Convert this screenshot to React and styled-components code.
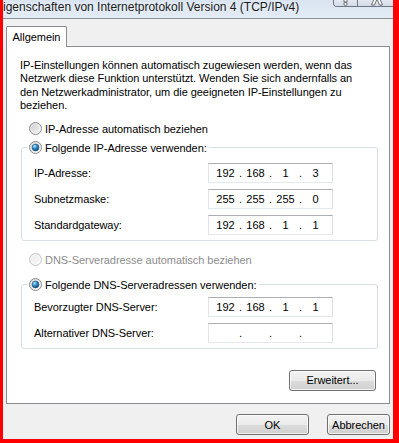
import React from 'react';
import styled, { createGlobalStyle } from 'styled-components';

const FONT = `"Liberation Sans", Arial, sans-serif`;

const Global = createGlobalStyle`
  html, body { margin: 0; padding: 0; background: #fff; }
  body { width: 399px; height: 443px; overflow: hidden; }
  *, *::before, *::after { box-sizing: border-box; }
`;

const Frame = styled.div`
  width: 399px;
  height: 443px;
  border-left: 3px solid #ff0000;
  border-right: 6px solid #ff0000;
  border-bottom: 4px solid #ff0000;
  display: flex;
  flex-direction: column;
  background: #f0f0f0;
  font-family: ${FONT};
  font-size: 11px;
  letter-spacing: -0.05px;
  color: #000;
  overflow: hidden;
`;

const TitleBar = styled.div`
  flex: none;
  height: 19px;
  display: flex;
  align-items: flex-start;
  background: linear-gradient(#d9e4f1, #e3ebf5);
  border-bottom: 1px solid #8b8f96;
  overflow: hidden;
`;

const TitleText = styled.div`
  flex: none;
  margin-left: -8px;
  font-size: 12px;
  line-height: 14px;
  letter-spacing: 0;
  color: #1b1b1b;
  white-space: nowrap;
  text-shadow: 0 0 5px rgba(255, 255, 255, 0.9);
`;

const CaptionButtons = styled.div`
  flex: none;
  margin-left: auto;
  display: flex;
  height: 7px;
  border: 1px solid #6f7784;
  border-top: none;
  border-right: none;
  border-radius: 0 0 0 4px;
  overflow: hidden;
`;

const CaptionButton = styled.div`
  flex: none;
  width: ${(p) => p.$w}px;
  height: 100%;
  display: flex;
  justify-content: center;
  align-items: flex-start;
  padding-left: ${(p) => p.$shift || 0}px;
  background: linear-gradient(#e4eaf2, #d3dbe6);
  & + & { border-left: 1px solid #6f7784; }
`;

const Client = styled.div`
  flex: 1;
  display: flex;
  flex-direction: column;
  padding: 7px 3px 0 3px;
`;

const TabStrip = styled.div`
  display: flex;
  height: 20px;
  position: relative;
  z-index: 1;
`;

const Tab = styled.div`
  width: 61px;
  height: 21px;
  background: #fff;
  border: 1px solid #898c95;
  border-bottom: none;
  border-radius: 2px 2px 0 0;
  display: flex;
  align-items: center;
  justify-content: center;
  padding-bottom: 1px;
`;

const Panel = styled.div`
  flex: none;
  height: 358px;
  background: #fff;
  border: 1px solid #898c95;
  padding: 12px 11px 0 13px;
  display: flex;
  flex-direction: column;
`;

const Intro = styled.p`
  margin: 0;
  line-height: 13.4px;
  white-space: nowrap;
`;

const RadioRow = styled.div`
  display: flex;
  align-items: center;
  gap: 3px;
  height: 16px;
  margin: ${(p) => p.$mt}px 0 0 9px;
  color: ${(p) => (p.$disabled ? '#8d8d8d' : '#000')};
  white-space: nowrap;
`;

const Group = styled.fieldset`
  margin: ${(p) => p.$mt}px 0 0 1px;
  padding: ${(p) => p.$pt}px 0 ${(p) => p.$pb}px 12px;
  border: 1px solid #d5dfe5;
  border-radius: 3px;
  min-width: 0;
  display: flex;
  flex-direction: column;
  gap: 6px;
`;

const Legend = styled.legend`
  margin-left: -7px;
  padding: 0 2px;
  height: 16px;
  display: flex;
  align-items: center;
  gap: 3px;
  white-space: nowrap;
`;

const FieldRow = styled.div`
  display: grid;
  grid-template-columns: 174px 125px;
  align-items: center;
  height: 20px;
  white-space: nowrap;
`;

const IpBox = styled.div`
  height: 20px;
  border: 1px solid;
  border-color: #abadb3 #dbdfe6 #e3e9ef #e2e3ea;
  background: #fff;
  display: grid;
  grid-template-columns: 1fr 3px 1fr 3px 1fr 3px 1fr;
  padding: 0 3px;
  align-items: center;
  text-align: center;
  letter-spacing: 0;
`;

const Dot = styled.span`
  display: flex;
  justify-content: center;
`;

const Button = styled.button`
  width: ${(p) => p.$w}px;
  height: 21px;
  flex: none;
  padding: 0;
  font: inherit;
  letter-spacing: inherit;
  color: #000;
  border: 1px solid #707070;
  border-radius: 3px;
  background: linear-gradient(#f2f2f2 0%, #ebebeb 50%, #dddddd 51%, #cfcfcf 100%);
  box-shadow: inset 0 0 0 1px rgba(255, 255, 255, 0.75);
`;

const AdvancedButton = styled(Button)`
  align-self: flex-end;
  margin: 21px 2px 0 0;
`;

const Footer = styled.div`
  display: flex;
  justify-content: flex-end;
  gap: 18px;
  margin-top: 10px;
`;

const RadioSvg = styled.svg`
  display: block;
  flex: none;
`;

function Radio({ checked, disabled }) {
  const id = checked ? 'rc' : disabled ? 'rd' : 'ru';
  return (
    <RadioSvg width="13" height="13" viewBox="0 0 13 13">
      <defs>
        <linearGradient id={`${id}-bg`} x1="0" y1="0" x2="1" y2="1">
          <stop offset="0" stopColor={disabled ? '#e9e9e9' : '#c9c9c9'} />
          <stop offset="1" stopColor={disabled ? '#fbfbfb' : '#f9f9f9'} />
        </linearGradient>
        <radialGradient id={`${id}-dot`} cx="0.35" cy="0.3" r="0.8">
          <stop offset="0" stopColor="#b5ecff" />
          <stop offset="0.45" stopColor="#2f8dc8" />
          <stop offset="1" stopColor="#0b3a68" />
        </radialGradient>
      </defs>
      <circle cx="6.5" cy="6.5" r="6" fill={`url(#${id}-bg)`} stroke={disabled ? '#c6c6c6' : '#8a8d90'} />
      <circle cx="6.5" cy="6.5" r="4.6" fill="none" stroke="#ffffff" strokeOpacity="0.55" strokeWidth="0.8" />
      {checked && (
        <circle cx="6.5" cy="6.5" r="3.4" fill={`url(#${id}-dot)`} stroke="#1d4e7c" strokeWidth="0.6" />
      )}
    </RadioSvg>
  );
}

function IpField({ parts }) {
  return (
    <IpBox>
      <span>{parts[0]}</span>
      <Dot>.</Dot>
      <span>{parts[1]}</span>
      <Dot>.</Dot>
      <span>{parts[2]}</span>
      <Dot>.</Dot>
      <span>{parts[3]}</span>
    </IpBox>
  );
}

function Field({ label, parts }) {
  return (
    <FieldRow>
      <span>{label}</span>
      <IpField parts={parts} />
    </FieldRow>
  );
}

export default function App() {
  return (
    <>
      <Global />
      <Frame>
        <TitleBar>
          <TitleText>Eigenschaften von Internetprotokoll Version 4 (TCP/IPv4)</TitleText>
          <CaptionButtons>
            <CaptionButton $w={23}>
              <svg width="7" height="6" viewBox="0 0 7 6">
                <rect x="2" y="-1" width="3" height="3" fill="#fff" stroke="#4b4f55" strokeWidth="0.8" />
                <circle cx="3.5" cy="4" r="1.6" fill="#fff" stroke="#4b4f55" strokeWidth="0.8" />
              </svg>
            </CaptionButton>
            <CaptionButton $w={36} $shift={2}>
              <svg width="12" height="6" viewBox="0 0 12 6">
                <polygon points="3,-1 6,-1 3.5,5 0.5,5" fill="#fff" stroke="#4b4f55" strokeWidth="0.8" />
                <polygon points="6,-1 9,-1 11.5,5 8.5,5" fill="#fff" stroke="#4b4f55" strokeWidth="0.8" />
              </svg>
            </CaptionButton>
          </CaptionButtons>
        </TitleBar>

        <Client>
          <TabStrip>
            <Tab>Allgemein</Tab>
          </TabStrip>
          <Panel>
            <Intro>
              IP-Einstellungen können automatisch zugewiesen werden, wenn das
              <br />
              Netzwerk diese Funktion unterstützt. Wenden Sie sich andernfalls an
              <br />
              den Netzwerkadministrator, um die geeigneten IP-Einstellungen zu
              <br />
              beziehen.
            </Intro>

            <RadioRow $mt={8}>
              <Radio />
              <span>IP-Adresse automatisch beziehen</span>
            </RadioRow>

            <Group $mt={3} $pt={7} $pb={5}>
              <Legend>
                <Radio checked />
                <span>Folgende IP-Adresse verwenden:</span>
              </Legend>
              <Field label="IP-Adresse:" parts={['192', '168', '1', '3']} />
              <Field label="Subnetzmaske:" parts={['255', '255', '255', '0']} />
              <Field label="Standardgateway:" parts={['192', '168', '1', '1']} />
            </Group>

            <RadioRow $mt={11} $disabled>
              <Radio disabled />
              <span>DNS-Serveradresse automatisch beziehen</span>
            </RadioRow>

            <Group $mt={9} $pt={4} $pb={5}>
              <Legend>
                <Radio checked />
                <span>Folgende DNS-Serveradressen verwenden:</span>
              </Legend>
              <Field label="Bevorzugter DNS-Server:" parts={['192', '168', '1', '1']} />
              <Field label="Alternativer DNS-Server:" parts={['', '', '', '']} />
            </Group>

            <AdvancedButton $w={87}>Erweitert...</AdvancedButton>
          </Panel>

          <Footer>
            <Button $w={73}>OK</Button>
            <Button $w={63}>Abbrechen</Button>
          </Footer>
        </Client>
      </Frame>
    </>
  );
}
